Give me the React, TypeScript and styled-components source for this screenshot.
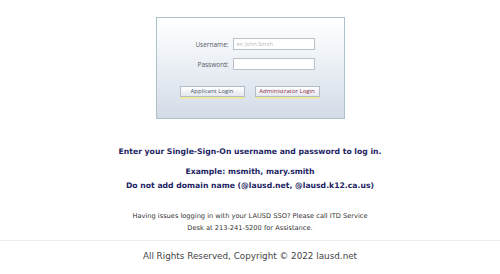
import React from "react";
import styled, { createGlobalStyle } from "styled-components";

const GlobalStyle = createGlobalStyle`
    html, body {
        margin: 0;
        padding: 0;
        background: #ffffff;
    }
`;

const Page = styled.main`
    width: 500px;
    display: flex;
    flex-direction: column;
    align-items: center;
`;

const LoginPanel = styled.form`
    margin-top: 17px;
    width: 189px;
    height: 102px;
    border: 1px solid #a9c3c9;
    background: linear-gradient(to bottom, #ffffff 0%, #eef2f7 40%, #d3dbe7 100%);
    display: flex;
    flex-direction: column;
    padding-top: 20px;
    box-sizing: border-box;
`;

const FieldRow = styled.div`
    display: flex;
    align-items: center;
    gap: 4px;
    height: 12px;
    margin-bottom: 8px;
`;

const Label = styled.label`
    width: 72px;
    text-align: right;
    font-family: "Open Sans", "Liberation Sans", sans-serif;
    font-size: 6.5px;
    color: #555a66;
`;

const Input = styled.input`
    width: 82px;
    height: 12px;
    box-sizing: border-box;
    border: 1px solid #b9c1c9;
    background: #ffffff;
    padding: 0 3px;
    font-family: "Open Sans", "Liberation Sans", sans-serif;
    font-size: 5.5px;
    color: #333;
    outline: none;
    &::placeholder {
        color: #b3b7bd;
    }
`;

const ButtonRow = styled.div`
    display: flex;
    gap: 10px;
    padding-left: 23px;
    margin-top: 8px;
`;

const LoginButton = styled.button<{ $tone: "applicant" | "admin" }>`
    width: 65px;
    height: 11px;
    padding: 0;
    box-sizing: border-box;
    border: 1px solid #b4bcc8;
    background: linear-gradient(to bottom, #ffffff, #e4e8ef);
    font-family: "Open Sans", "Liberation Sans", sans-serif;
    font-size: 6px;
    line-height: 9px;
    color: ${(p) => (p.$tone === "admin" ? "#8a2a45" : "#4a5568")};
    box-shadow: 0 2px 0 -0.5px #f2e88a;
    cursor: pointer;
`;

const Instructions = styled.section`
    margin-top: 26px;
    font-family: Verdana, "DejaVu Sans", sans-serif;
    font-weight: bold;
    font-size: 7.7px;
    color: #221f63;
    text-align: center;
    line-height: 14px;
`;

const Lead = styled.p`
    margin: 0 0 6px;
`;

const Example = styled.p`
    margin: 0;
`;

const HelpText = styled.p`
    margin: 17px 0 0;
    width: 240px;
    font-family: Verdana, "DejaVu Sans", sans-serif;
    font-size: 6.65px;
    line-height: 12px;
    color: #333333;
    text-align: center;
`;

const Footer = styled.footer`
    margin-top: 6px;
    width: 100%;
    border-top: 1px solid #ececec;
    padding-top: 9px;
    font-family: Verdana, "DejaVu Sans", sans-serif;
    font-size: 8.8px;
    line-height: 12px;
    color: #444;
    text-align: center;
`;

const App = () => {
    return (
        <>
            <GlobalStyle />
            <Page>
                <LoginPanel onSubmit={(e) => e.preventDefault()}>
                    <FieldRow>
                        <Label htmlFor="username">Username:</Label>
                        <Input id="username" placeholder="ex: John.Smith" />
                    </FieldRow>
                    <FieldRow>
                        <Label htmlFor="password">Password:</Label>
                        <Input id="password" type="password" />
                    </FieldRow>
                    <ButtonRow>
                        <LoginButton type="button" $tone="applicant">
                            Applicant Login
                        </LoginButton>
                        <LoginButton type="button" $tone="admin">
                            Administrator Login
                        </LoginButton>
                    </ButtonRow>
                </LoginPanel>
                <Instructions>
                    <Lead>
                        Enter your Single-Sign-On username and password to log in.
                    </Lead>
                    <Example>Example: msmith, mary.smith</Example>
                    <Example>
                        Do not add domain name (@lausd.net, @lausd.k12.ca.us)
                    </Example>
                </Instructions>
                <HelpText>
                    Having issues logging in with your LAUSD SSO? Please call ITD
                    Service Desk at 213-241-5200 for Assistance.
                </HelpText>
                <Footer>All Rights Reserved, Copyright © 2022 lausd.net</Footer>
            </Page>
        </>
    );
};

export default App;
